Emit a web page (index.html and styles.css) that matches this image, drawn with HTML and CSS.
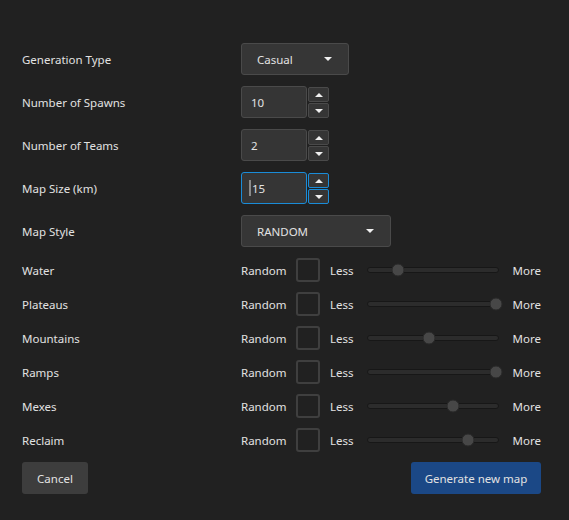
FILE: index.html
```html
<!DOCTYPE html>
<html lang="en">
<head>
    <meta charset="UTF-8">
    <title>Generate map</title>
    <link rel="stylesheet" href="styles.css">
</head>
<body>
<div class="dialog">
    <div class="settings">
        <div class="row">
            <span class="label">Generation Type</span>
            <div class="combo combo-small">
                <span>Casual</span>
                <span class="arrow"></span>
            </div>
        </div>
        <div class="row">
            <span class="label">Number of Spawns</span>
            <div class="spinner">
                <div class="spin-text">10</div>
                <div class="spin-buttons">
                    <div class="spin-btn"><span class="up"></span></div>
                    <div class="spin-btn"><span class="down"></span></div>
                </div>
            </div>
        </div>
        <div class="row">
            <span class="label">Number of Teams</span>
            <div class="spinner">
                <div class="spin-text">2</div>
                <div class="spin-buttons">
                    <div class="spin-btn"><span class="up"></span></div>
                    <div class="spin-btn"><span class="down"></span></div>
                </div>
            </div>
        </div>
        <div class="row">
            <span class="label">Map Size (km)</span>
            <div class="spinner focused">
                <div class="spin-text"><span class="caret"></span>15</div>
                <div class="spin-buttons">
                    <div class="spin-btn"><span class="up"></span></div>
                    <div class="spin-btn"><span class="down"></span></div>
                </div>
            </div>
        </div>
        <div class="row">
            <span class="label">Map Style</span>
            <div class="combo combo-wide">
                <span>RANDOM</span>
                <span class="arrow"></span>
            </div>
        </div>
    </div>

    <div class="sliders">
        <div class="slider-row">
            <span class="label">Water</span>
            <span class="random">Random</span>
            <span class="check"></span>
            <span class="less">Less</span>
            <div class="track"><span class="thumb" style="left: 23%"></span></div>
            <span class="more">More</span>
        </div>
        <div class="slider-row">
            <span class="label">Plateaus</span>
            <span class="random">Random</span>
            <span class="check"></span>
            <span class="less">Less</span>
            <div class="track"><span class="thumb" style="left: 98.5%"></span></div>
            <span class="more">More</span>
        </div>
        <div class="slider-row">
            <span class="label">Mountains</span>
            <span class="random">Random</span>
            <span class="check"></span>
            <span class="less">Less</span>
            <div class="track"><span class="thumb" style="left: 47%"></span></div>
            <span class="more">More</span>
        </div>
        <div class="slider-row">
            <span class="label">Ramps</span>
            <span class="random">Random</span>
            <span class="check"></span>
            <span class="less">Less</span>
            <div class="track"><span class="thumb" style="left: 98.5%"></span></div>
            <span class="more">More</span>
        </div>
        <div class="slider-row">
            <span class="label">Mexes</span>
            <span class="random">Random</span>
            <span class="check"></span>
            <span class="less">Less</span>
            <div class="track"><span class="thumb" style="left: 66%"></span></div>
            <span class="more">More</span>
        </div>
        <div class="slider-row">
            <span class="label">Reclaim</span>
            <span class="random">Random</span>
            <span class="check"></span>
            <span class="less">Less</span>
            <div class="track"><span class="thumb" style="left: 77%"></span></div>
            <span class="more">More</span>
        </div>
    </div>

    <div class="buttons">
        <button class="btn btn-cancel">Cancel</button>
        <button class="btn btn-primary">Generate new map</button>
    </div>
</div>
</body>
</html>
```

FILE: styles.css
```css
* {
    margin: 0;
    padding: 0;
    box-sizing: border-box;
}

body {
    background: #212121;
    color: #e2e2e2;
    font-family: "Noto Sans", "Open Sans", sans-serif;
    font-size: 11.5px;
}

.dialog {
    padding: 43px 28px 0 22px;
    display: flex;
    flex-direction: column;
}

.settings {
    display: flex;
    flex-direction: column;
    gap: 11px;
}

.row {
    display: flex;
    align-items: center;
    height: 32px;
}

.label {
    width: 219px;
    flex-shrink: 0;
}

/* combo boxes */
.combo {
    height: 32px;
    display: flex;
    align-items: center;
    justify-content: space-between;
    padding: 0 16px 0 15px;
    background: #363636;
    border: 1px solid #4a4a4a;
    border-radius: 3px;
}

.combo-small {
    width: 108px;
}

.combo-wide {
    width: 150px;
}

.arrow {
    width: 0;
    height: 0;
    border-left: 4px solid transparent;
    border-right: 4px solid transparent;
    border-top: 4px solid #f0f0f0;
}

/* number spinners */
.spinner {
    display: flex;
    gap: 1px;
    height: 32px;
}

.spin-text {
    width: 66px;
    height: 32px;
    display: flex;
    align-items: center;
    padding-left: 9px;
    background: #353535;
    border: 1px solid #4a4a4a;
    border-radius: 3px;
}

.spin-buttons {
    display: flex;
    flex-direction: column;
    gap: 1px;
    padding-top: 1px;
}

.spin-btn {
    width: 21px;
    height: 15px;
    display: flex;
    align-items: center;
    justify-content: center;
    background: #353535;
    border: 1px solid #4a4a4a;
    border-radius: 2px;
}

.up,
.down {
    width: 0;
    height: 0;
    border-left: 4px solid transparent;
    border-right: 4px solid transparent;
}

.up {
    border-bottom: 4px solid #f0f0f0;
}

.down {
    border-top: 4px solid #f0f0f0;
}

.focused .spin-text,
.focused .spin-btn {
    border-color: #1a8cd8;
}

.focused .spin-text {
    padding-left: 7px;
}

.caret {
    width: 2px;
    height: 16px;
    background: #8a8a8a;
    margin-right: 1px;
}

/* sliders */
.sliders {
    margin-top: 11px;
    display: flex;
    flex-direction: column;
    gap: 10px;
}

.slider-row {
    display: flex;
    align-items: center;
    height: 24px;
}

.random {
    width: 55px;
}

.check {
    width: 24px;
    height: 24px;
    border: 2px solid #3f3f3f;
    border-radius: 3px;
    margin-right: 10px;
}

.less {
    width: 37px;
}

.track {
    position: relative;
    width: 132px;
    height: 6px;
    background: #2c2c2c;
    border: 1px solid #171717;
    border-radius: 3px;
    margin-right: 14px;
}

.thumb {
    position: absolute;
    top: 50%;
    width: 13px;
    height: 13px;
    border-radius: 50%;
    background: #474747;
    border: 1px solid #2a2a2a;
    transform: translate(-50%, -50%);
}

/* buttons */
.buttons {
    margin-top: 10px;
    display: flex;
    justify-content: space-between;
}

.btn {
    height: 32px;
    border: none;
    border-radius: 3px;
    color: #e2e2e2;
    font-family: inherit;
    font-size: 11.5px;
}

.btn-cancel {
    width: 66px;
    background: #3d3d3d;
}

.btn-primary {
    width: 130px;
    background: #1b4886;
}
```
